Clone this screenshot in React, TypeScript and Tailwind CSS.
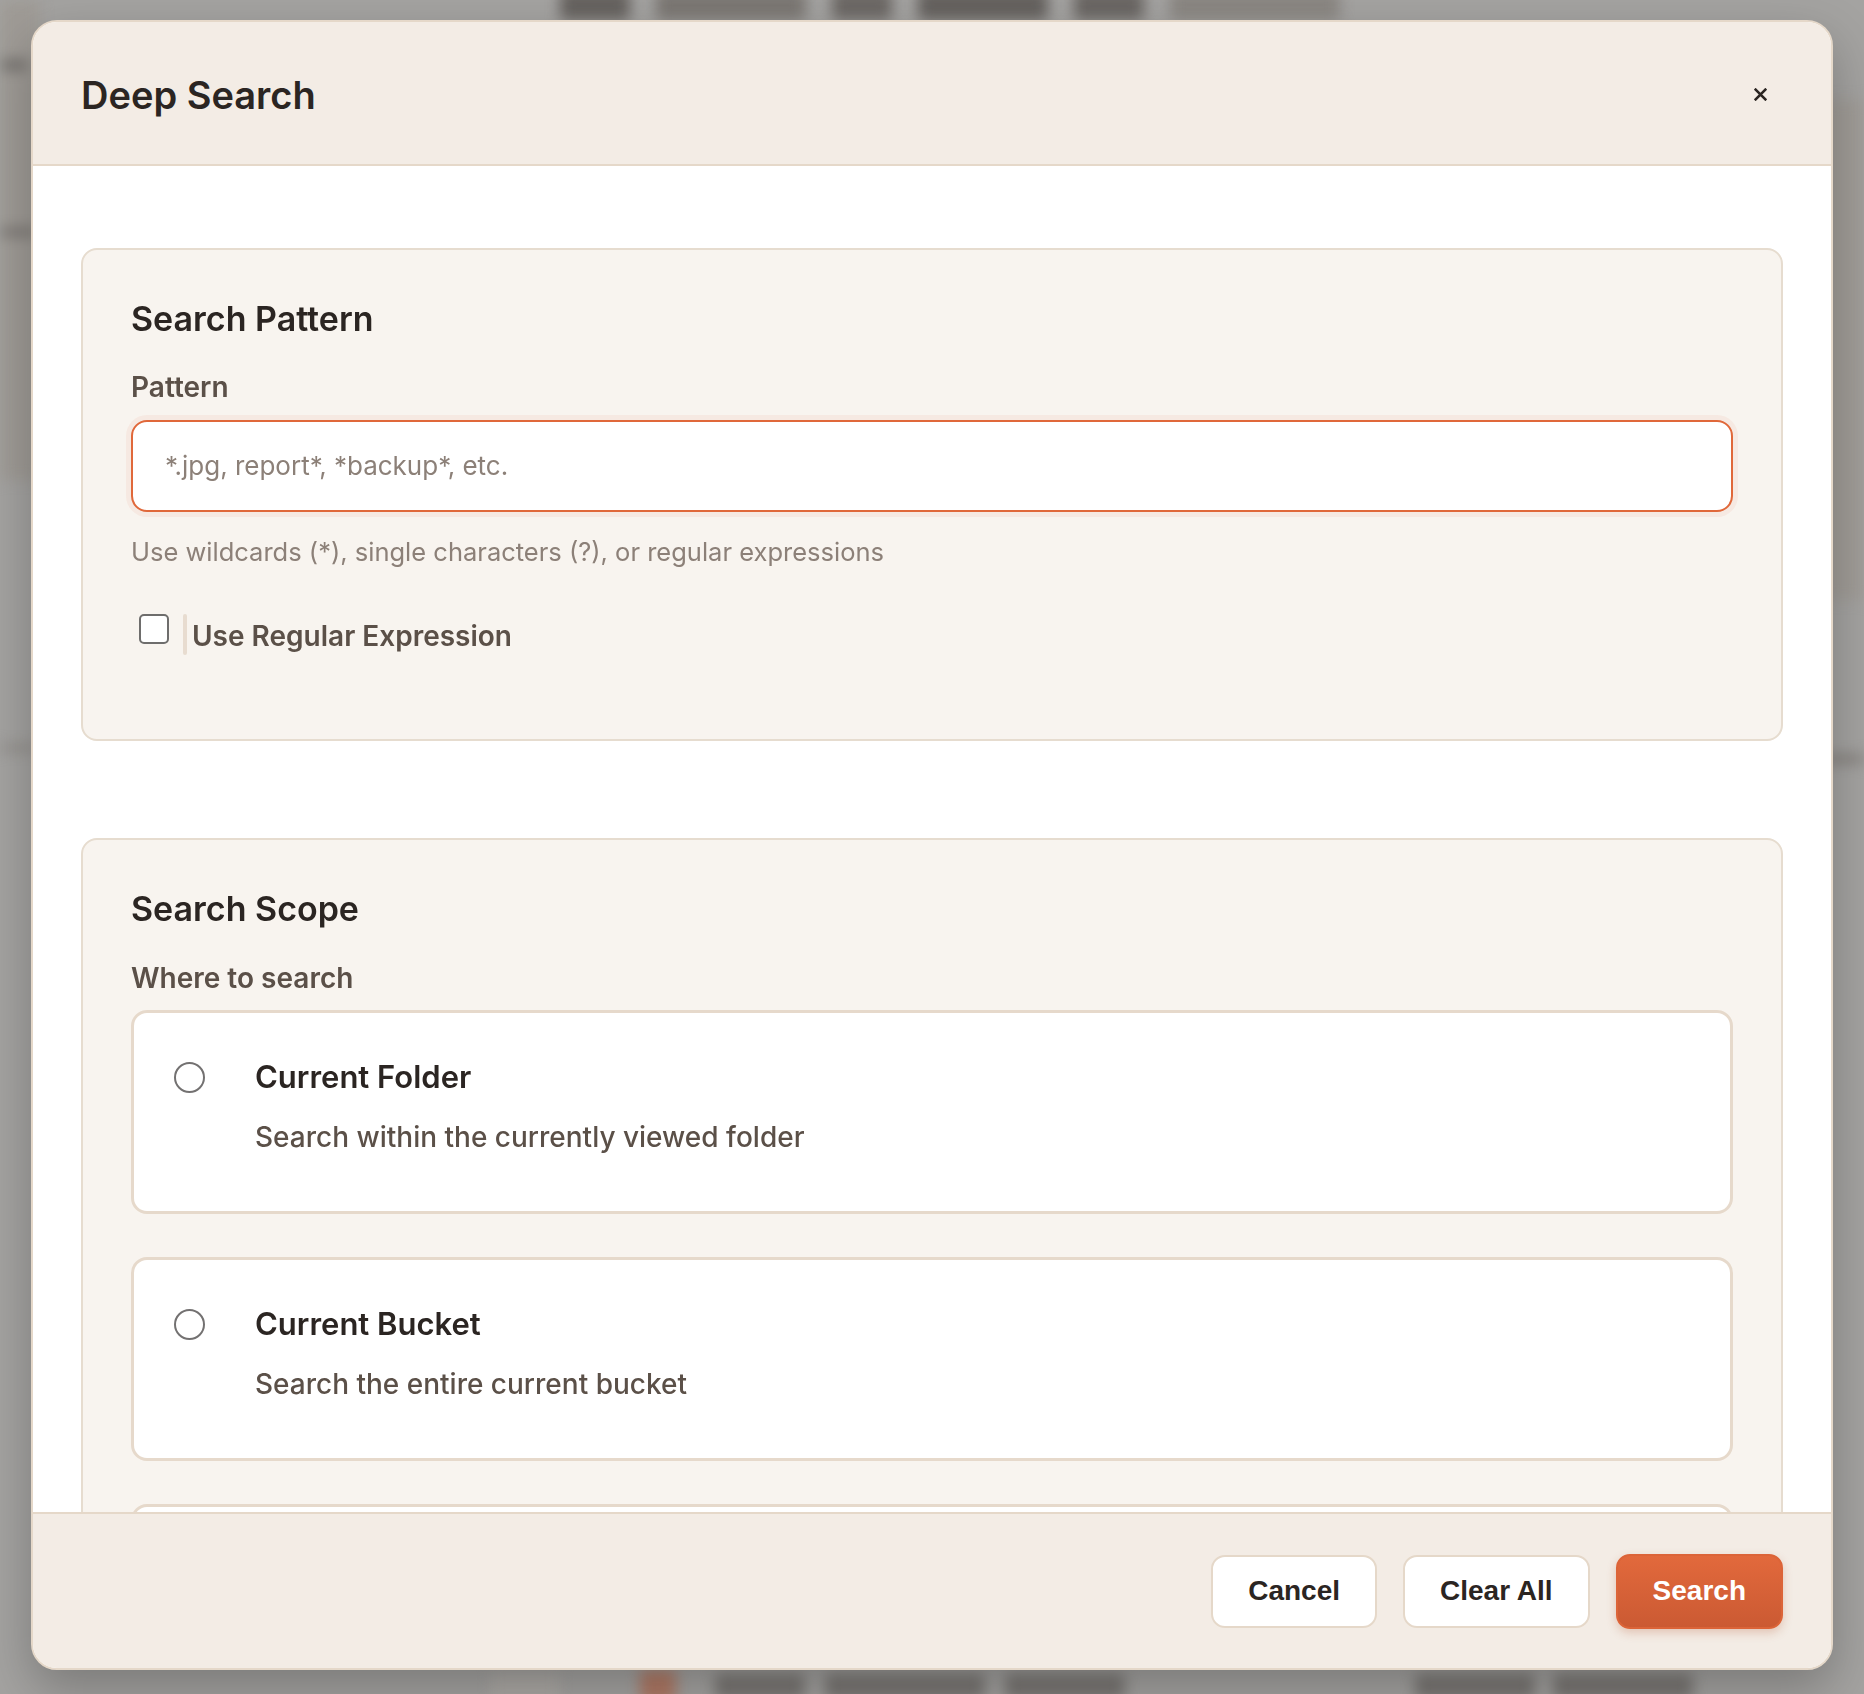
const FONT = { fontFamily: 'Inter, "Noto Sans", sans-serif' };
const BTN_FONT = { fontFamily: '"Liberation Sans", Arial, sans-serif' };

type ScopeOption = { id: string; title: string; description: string };

const scopeOptions: ScopeOption[] = [
  { id: "folder", title: "Current Folder", description: "Search within the currently viewed folder" },
  { id: "bucket", title: "Current Bucket", description: "Search the entire current bucket" },
  { id: "all", title: "All Buckets", description: "Search across every bucket you can access" },
];

function CloseIcon() {
  return (
    <svg width="13" height="13" viewBox="0 0 12 12" fill="none" stroke="#2b2522" strokeWidth={2.4} strokeLinecap="square">
      <path d="M1.5 1.5l9 9M10.5 1.5l-9 9" />
    </svg>
  );
}

function BlurredPage() {
  // the app behind the dialog, out of focus under the overlay
  return (
    <div className="absolute inset-0 [filter:blur(7px)]">
      <div className="absolute left-0 top-0 h-[480px] w-[40px] bg-[#9f9b96]" />
      <div className="absolute left-0 top-[60px] h-[10px] w-[28px] rounded-full bg-[#6f6c69]" />
      <div className="absolute left-0 top-[228px] h-[8px] w-[36px] bg-[#75716d]" />
      <div className="absolute left-0 top-[745px] h-[6px] w-[36px] bg-[#8c8884]" />
      <div className="absolute right-0 top-[100px] h-[500px] w-[40px] bg-[#a09c97]" />
      <div className="absolute right-0 top-[755px] h-[8px] w-[40px] bg-[#807b77]" />
      {/* page heading, mostly hidden behind the dialog */}
      <div className="absolute left-[560px] top-[-10px] flex gap-[26px]">
        <div className="h-[30px] w-[70px] rounded bg-[#66625f]" />
        <div className="h-[30px] w-[150px] rounded bg-[#7b7773]" />
        <div className="h-[30px] w-[60px] rounded bg-[#6c6865]" />
        <div className="h-[30px] w-[130px] rounded bg-[#65615e]" />
        <div className="h-[30px] w-[70px] rounded bg-[#6a6663]" />
        <div className="h-[30px] w-[170px] rounded bg-[#8a8682]" />
      </div>
      {/* table header row below the dialog */}
      <div className="absolute left-[490px] top-[1672px] h-[30px] w-[70px] bg-[#aca9a5]" />
      <div className="absolute left-[640px] top-[1670px] h-[34px] w-[36px] rounded bg-[#b07a66]" />
      <div className="absolute left-[715px] top-[1674px] flex gap-[20px]">
        <div className="h-[26px] w-[90px] rounded bg-[#7a7774]" />
        <div className="h-[26px] w-[160px] rounded bg-[#7a7774]" />
        <div className="h-[26px] w-[120px] rounded bg-[#7a7774]" />
      </div>
      <div className="absolute left-[1415px] top-[1674px] flex gap-[18px]">
        <div className="h-[26px] w-[120px] rounded bg-[#7a7774]" />
        <div className="h-[26px] w-[140px] rounded bg-[#7a7774]" />
      </div>
    </div>
  );
}

function OptionCard({ option }: { option: ScopeOption }) {
  return (
    <div className="flex items-start rounded-[16px] border-[3px] border-[#e6d9cb] bg-white pb-[54px] pl-[40px] pr-[40px] pt-[43px]">
      <span className="mt-[6px] h-[31px] w-[31px] shrink-0 rounded-full border-2 border-[#737171] bg-white" />
      <div className="ml-[50px] flex flex-col">
        <span className="text-[31px] font-semibold leading-[42px] text-[#2b2522]">{option.title}</span>
        <span className="mt-[20px] text-[28px] font-medium leading-[39px] text-[#5b5048]">{option.description}</span>
      </div>
    </div>
  );
}

export default function App() {
  return (
    <div className="relative h-[1694px] w-full overflow-hidden bg-[#a4a3a1]" style={FONT}>
      <BlurredPage />

      <div className="relative flex justify-center pt-[20px]">
        <div className="flex h-[1650px] w-[1802px] flex-col overflow-hidden rounded-[26px] border-2 border-[#e5d8c9] bg-white shadow-[0_20px_50px_rgba(0,0,0,0.25)]">
          {/* header */}
          <div className="flex h-[144px] shrink-0 items-center justify-between border-b-2 border-[#e5d8c9] bg-[#f3ece5] px-[48px] pt-[3px]">
            <h1 className="text-[38px] font-semibold leading-[46px] text-[#2b2522]">Deep Search</h1>
            <button className="flex h-[46px] w-[46px] items-center justify-center rounded-lg">
              <CloseIcon />
            </button>
          </div>

          {/* body */}
          <div className="min-h-0 flex-1 overflow-hidden bg-white px-[48px] pt-[82px]">
            <section className="rounded-[16px] border-2 border-[#e6dccf] bg-[#f8f4ef] px-[48px] pb-[82px] pt-[48px]">
              <h2 className="text-[34px] font-semibold leading-[42px] text-[#2b2522]">Search Pattern</h2>
              <label className="mt-[29px] block text-[28px] font-semibold leading-[36px] text-[#5b5048]">Pattern</label>
              <div className="mt-[15px] flex h-[92px] items-center rounded-[16px] border-2 border-[#e0683a] bg-white px-[32px] shadow-[0_0_0_5px_rgba(224,104,58,0.07)]">
                <span className="text-[26px] leading-[36px] text-[#8c8078]">*.jpg, report*, *backup*, etc.</span>
              </div>
              <p className="mt-[22px] text-[25.5px] leading-[36px] text-[#8c8078]">
                Use wildcards (*), single characters (?), or regular expressions
              </p>
              <div className="mt-[44px] flex items-start">
                <span className="ml-[8px] h-[30px] w-[30px] shrink-0 rounded-[5px] border-2 border-[#6e6d6c] bg-white" />
                <span className="ml-[14px] h-[41px] w-[4px] rounded-full bg-[#e8dcd0]" />
                <span className="ml-[5px] mt-[2px] text-[28px] font-semibold leading-[41px] text-[#5b5048]">Use Regular Expression</span>
              </div>
            </section>

            <section className="mt-[97px] rounded-[16px] border-2 border-[#e6dccf] bg-[#f8f4ef] px-[48px] pb-[48px] pt-[48px]">
              <h2 className="text-[34px] font-semibold leading-[42px] text-[#2b2522]">Search Scope</h2>
              <label className="mt-[30px] block text-[28px] font-semibold leading-[36px] text-[#5b5048]">Where to search</label>
              <div className="mt-[14px] flex flex-col gap-[43px]">
                {scopeOptions.map((o) => (
                  <OptionCard key={o.id} option={o} />
                ))}
              </div>
            </section>
          </div>

          {/* footer */}
          <div className="flex h-[156px] shrink-0 items-center justify-end gap-[26px] border-t-2 border-[#e5d8c9] bg-[#f3ece5] px-[48px]" style={BTN_FONT}>
            <button className="h-[73px] rounded-[14px] border-2 border-[#e5d8c9] bg-white px-[35px] text-[28px] font-bold text-[#2b2522]">
              Cancel
            </button>
            <button className="h-[73px] rounded-[14px] border-2 border-[#e5d8c9] bg-white px-[35px] text-[28px] font-bold text-[#2b2522]">
              Clear All
            </button>
            <button className="h-[75px] rounded-[14px] border-2 border-[#dc6438] bg-gradient-to-b from-[#e2693c] to-[#cb5a33] px-[35px] text-[28px] font-bold text-white shadow-[0_4px_10px_rgba(180,80,40,0.25)]">
              Search
            </button>
          </div>
        </div>
      </div>
    </div>
  );
}
